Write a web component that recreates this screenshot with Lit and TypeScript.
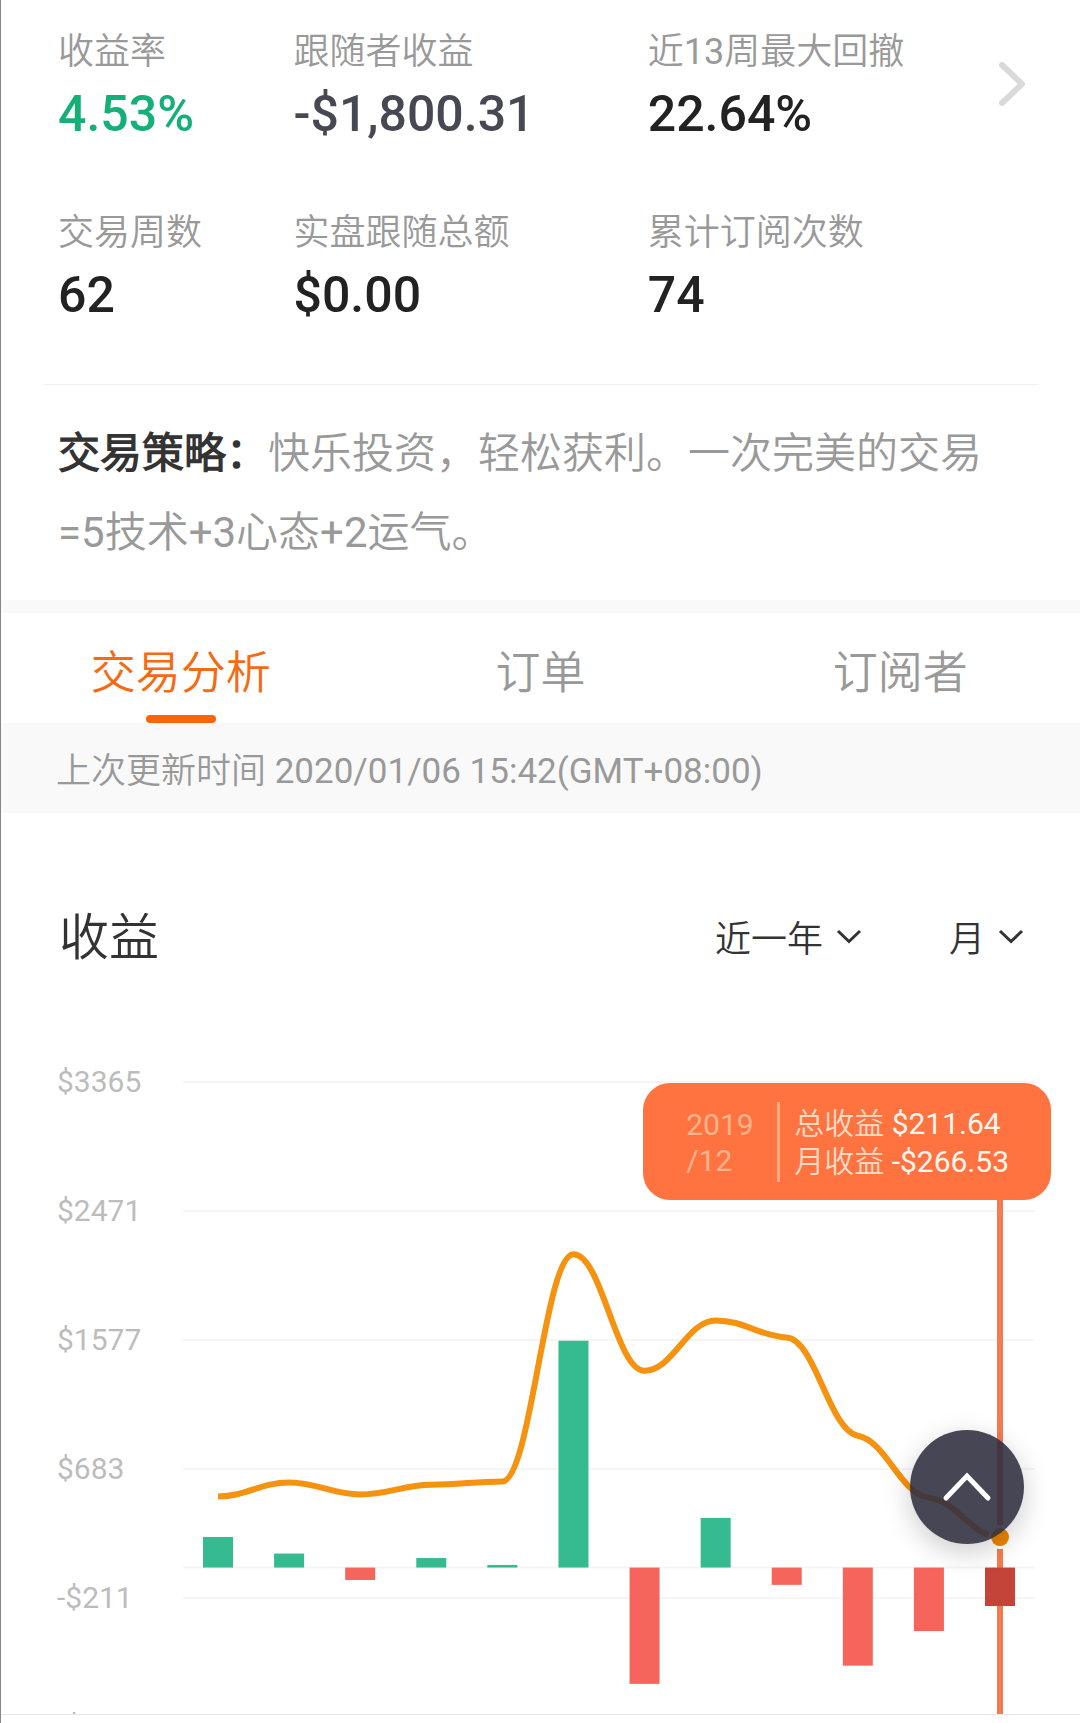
import { LitElement, html, svg, css } from "lit";
import { customElement, state } from "lit/decorators.js";
import { classMap } from "lit/directives/class-map.js";

interface Stat {
  label: string;
  value: string;
  tone?: "up" | "muted";
}

const STATS: Stat[] = [
  { label: "收益率", value: "4.53%", tone: "up" },
  { label: "跟随者收益", value: "-$1,800.31", tone: "muted" },
  { label: "近13周最大回撤", value: "22.64%" },
  { label: "交易周数", value: "62" },
  { label: "实盘跟随总额", value: "$0.00" },
  { label: "累计订阅次数", value: "74" },
];

const TABS = ["交易分析", "订单", "订阅者"];

/* Monthly profit and running total, in dollars. */
const MONTHLY = [212, 97, -86, 66, 18, 1572, -806, 344, -120, -680, -440, -266.53];
const TOTAL = [493, 590, 507, 574, 597, 2171, 1364, 1713, 1594, 913, 484, 211.64];
const TICKS = [3365, 2471, 1577, 683, -211, -1105];

const STEP = 129 / 894;
const yOf = (v: number) => 22 + (3365 - v) * STEP;
const xOf = (i: number) => 218 + (i * 782) / 11;
const money = (v: number) => (v < 0 ? `-$${-v}` : `$${v}`);

/* Monotone smooth path: flat at turning points, a gentle slope elsewhere. */
function smoothPath(values: number[]): string {
  const pts = values.map((v, i) => [xOf(i), yOf(v)]);
  const slope = (i: number) => (pts[i + 1][1] - pts[i][1]) / (pts[i + 1][0] - pts[i][0]);
  const tangent = pts.map((_, i) => {
    if (i === 0 || i === pts.length - 1) return 0;
    const a = slope(i - 1);
    const b = slope(i);
    return a * b <= 0 ? 0 : (2 * a * b) / (a + b) / 6;
  });
  const reach = ((pts[1][0] - pts[0][0]) * 2) / 5;
  let d = `M${pts[0][0]} ${pts[0][1]}`;
  for (let i = 1; i < pts.length; i++) {
    const [px, py] = pts[i - 1];
    const [x, y] = pts[i];
    d += `C${px + reach} ${py + tangent[i - 1] * reach} ${x - reach} ${y - tangent[i] * reach} ${x} ${y}`;
  }
  return d;
}

@customElement("profit-chart")
export class ProfitChart extends LitElement {
  static styles = css`
    :host {
      display: block;
      position: relative;
    }
    .plot {
      display: block;
      width: 100%;
      height: auto;
      overflow: hidden;
    }
    .tick {
      font: 400 30px Roboto, "Noto Sans CJK SC", sans-serif;
      fill: #bcbcbc;
    }
    .grid {
      stroke: #f5f5f5;
      stroke-width: 2;
    }
    .gain {
      fill: #36ba8f;
    }
    .loss {
      fill: #f5655b;
    }
    .picked {
      fill: #c5443a;
    }
    .curve {
      fill: none;
      stroke: #f5920f;
      stroke-width: 6;
    }
    .cursor {
      stroke: #f77b50;
      stroke-width: 6;
    }
    .halo {
      fill: #fff;
    }
    .dot {
      fill: #ee8500;
    }
    .tip {
      position: absolute;
      top: 23px;
      right: 29px;
      box-sizing: border-box;
      height: 117px;
      display: flex;
      align-items: center;
      padding: 0 42px 0 43px;
      border-radius: 27px;
      background: #ff7340;
      font-size: 30px;
    }
    .when {
      width: 91px;
      line-height: 36px;
      color: #ffb48e;
      padding-top: 2px;
    }
    .rule {
      width: 3px;
      height: 80px;
      background: #ffae88;
      margin-right: 14px;
    }
    .sums {
      line-height: 38px;
      color: #ffdcc8;
      white-space: nowrap;
      padding-top: 2px;
      font-family: Roboto, "Noto Sans CJK SC DemiLight", "Noto Sans CJK SC Light", "Noto Sans CJK SC", sans-serif;
    }
    .amount {
      color: #fff6ee;
    }
  `;

  render() {
    const last = MONTHLY.length - 1;
    const zero = yOf(0);
    return html`
      <svg class="plot" viewBox="1 0 1079 654" role="img" aria-label="收益">
        ${TICKS.map(
          (t) => svg`
            <line class="grid" x1="183" x2="1035" y1=${yOf(t)} y2=${yOf(t)}></line>
            <text class="tick" x="57" y=${yOf(t) + 10}>${money(t)}</text>`
        )}
        <line class="grid" x1="183" x2="1035" y1=${zero} y2=${zero}></line>
        <line class="cursor" x1="1000" x2="1000" y1="140" y2="654"></line>
        ${MONTHLY.map((v, i) => {
          const kind = i === last ? "picked" : v < 0 ? "loss" : "gain";
          return svg`<rect class=${kind} x=${xOf(i) - 15} width="30"
            y=${Math.min(zero, yOf(v))} height=${Math.abs(v) * STEP}></rect>`;
        })}
        <path class="curve" d=${smoothPath(TOTAL)}></path>
        <circle class="halo" cx="1000" cy=${yOf(TOTAL[last])} r="12"></circle>
        <circle class="dot" cx="1000" cy=${yOf(TOTAL[last])} r="9"></circle>
      </svg>
      <div class="tip">
        <div class="when">2019<br />/12</div>
        <div class="rule"></div>
        <div class="sums">
          <div>总收益 <span class="amount">$211.64</span></div>
          <div>月收益 <span class="amount">-$266.53</span></div>
        </div>
      </div>
    `;
  }
}

@customElement("app-root")
export class AppRoot extends LitElement {
  @state() private tab = 0;

  static styles = css`
    :host {
      display: block;
      background: #fff;
      border-left: 1px solid #868686;
      color: #222;
      font-family: Roboto, "Noto Sans CJK SC", sans-serif;
      font-weight: 400;
    }
    button,
    select {
      appearance: none;
      border: 0;
      margin: 0;
      padding: 0;
      background: none;
      color: inherit;
      font: inherit;
      cursor: pointer;
    }
    .light {
      font-family: Roboto, "Noto Sans CJK SC DemiLight", "Noto Sans CJK SC Light", "Noto Sans CJK SC", sans-serif;
    }
    .summary {
      display: flex;
      align-items: flex-start;
      margin: 0 41px 0 43px;
      padding: 28px 0 59px 14px;
      border-bottom: 1px solid #f0f0f0;
    }
    .stats {
      flex: 1;
      display: grid;
      grid-template-columns: 236fr 355fr 351fr;
      row-gap: 65px;
      margin: 0;
    }
    .stat {
      display: flex;
      flex-direction: column;
      gap: 8px;
      white-space: nowrap;
    }
    .label {
      font-size: 36px;
      line-height: 48px;
      color: #999;
    }
    .value {
      margin: 0;
      font-size: 50px;
      line-height: 60px;
      font-weight: 500;
    }
    .up {
      color: #14b077;
    }
    .muted {
      color: #484852;
    }
    .more {
      display: block;
      padding: 32px 11px 20px 0;
    }
    .more svg {
      display: block;
    }
    .strategy {
      margin: 0;
      padding: 29px 57px 28px;
      font-size: 42px;
      line-height: 79px;
      color: #999;
    }
    .strategy strong {
      color: #333;
      font-weight: 700;
    }
    .tabs {
      display: grid;
      grid-template-columns: repeat(3, 1fr);
      border-top: 13px solid #f9f9f9;
    }
    .tab {
      display: flex;
      flex-direction: column;
      align-items: center;
      gap: 10px;
      padding-top: 30px;
      font-size: 45px;
      line-height: 62px;
      color: #999;
    }
    .tab::after {
      content: "";
      width: 70px;
      height: 8px;
      border-radius: 4px;
    }
    .active {
      color: #f56a12;
    }
    .active::after {
      background: #fb6407;
    }
    .updated {
      margin: 0;
      padding: 25px 55px 17px;
      background: #f9f9f9;
      font-size: 35px;
      line-height: 48px;
      color: #999;
    }
    .head {
      display: flex;
      align-items: center;
      gap: 87px;
      padding: 95px 56px 92px 58px;
      color: #333;
    }
    .title {
      flex: 1;
      margin: 0;
      font-size: 50px;
      line-height: 60px;
      font-weight: 400;
    }
    .pick {
      display: grid;
      align-items: center;
    }
    .pick select,
    .pick svg {
      grid-area: 1 / 1;
    }
    .pick select {
      box-sizing: border-box;
      font-size: 36px;
      height: 60px;
      padding: 4px 38px 0 0;
    }
    .pick svg {
      justify-self: end;
      pointer-events: none;
    }
    .foot {
      height: 8px;
      border-top: 1px solid #e8e8e8;
    }
    .top {
      position: fixed;
      right: 56px;
      bottom: 179px;
      width: 114px;
      height: 114px;
      border-radius: 50%;
      background: rgba(47, 47, 63, 0.89);
      box-shadow: 0 8px 28px rgba(0, 0, 0, 0.2);
      display: grid;
      place-items: center;
    }
  `;

  private picker(name: string, options: string[]) {
    return html`<label class="pick">
      <select aria-label=${name}>
        ${options.map((o) => html`<option>${o}</option>`)}
      </select>
      <svg width="26" height="20" viewBox="0 0 26 20" fill="none" stroke="#333" stroke-width="3">
        <path d="M2 3 13 13.5 24 3"></path>
      </svg>
    </label>`;
  }

  render() {
    return html`
      <section class="summary">
        <dl class="stats">
          ${STATS.map(
            (s) => html`<div class="stat">
              <dt class="label light">${s.label}</dt>
              <dd class=${classMap({ value: true, up: s.tone === "up", muted: s.tone === "muted" })}>${s.value}</dd>
            </div>`
          )}
        </dl>
        <button class="more" aria-label="详情">
          <svg width="30" height="48" viewBox="0 0 30 48" fill="none" stroke="#dadada" stroke-width="6" stroke-linecap="round" stroke-linejoin="round">
            <path d="M4 5 24 24 4 43"></path>
          </svg>
        </button>
      </section>
      <p class="strategy light"><strong>交易策略：</strong>快乐投资，轻松获利。一次完美的交易=5技术+3心态+2运气。</p>
      <nav class="tabs">
        ${TABS.map(
          (t, i) => html`<button
            class=${classMap({ tab: true, light: true, active: i === this.tab })}
            @click=${() => (this.tab = i)}
          >${t}</button>`
        )}
      </nav>
      <p class="updated light">上次更新时间 2020/01/06 15:42(GMT+08:00)</p>
      <header class="head light">
        <h2 class="title">收益</h2>
        ${this.picker("时间范围", ["近一年"])} ${this.picker("周期", ["月"])}
      </header>
      <profit-chart></profit-chart>
      <div class="foot"></div>
      <button class="top" aria-label="返回顶部" @click=${() => window.scrollTo({ top: 0 })}>
        <svg width="52" height="34" viewBox="0 0 52 34" fill="none" stroke="#fff" stroke-width="5" stroke-linecap="round">
          <path d="M5 28 26 6 47 28"></path>
        </svg>
      </button>
    `;
  }
}
